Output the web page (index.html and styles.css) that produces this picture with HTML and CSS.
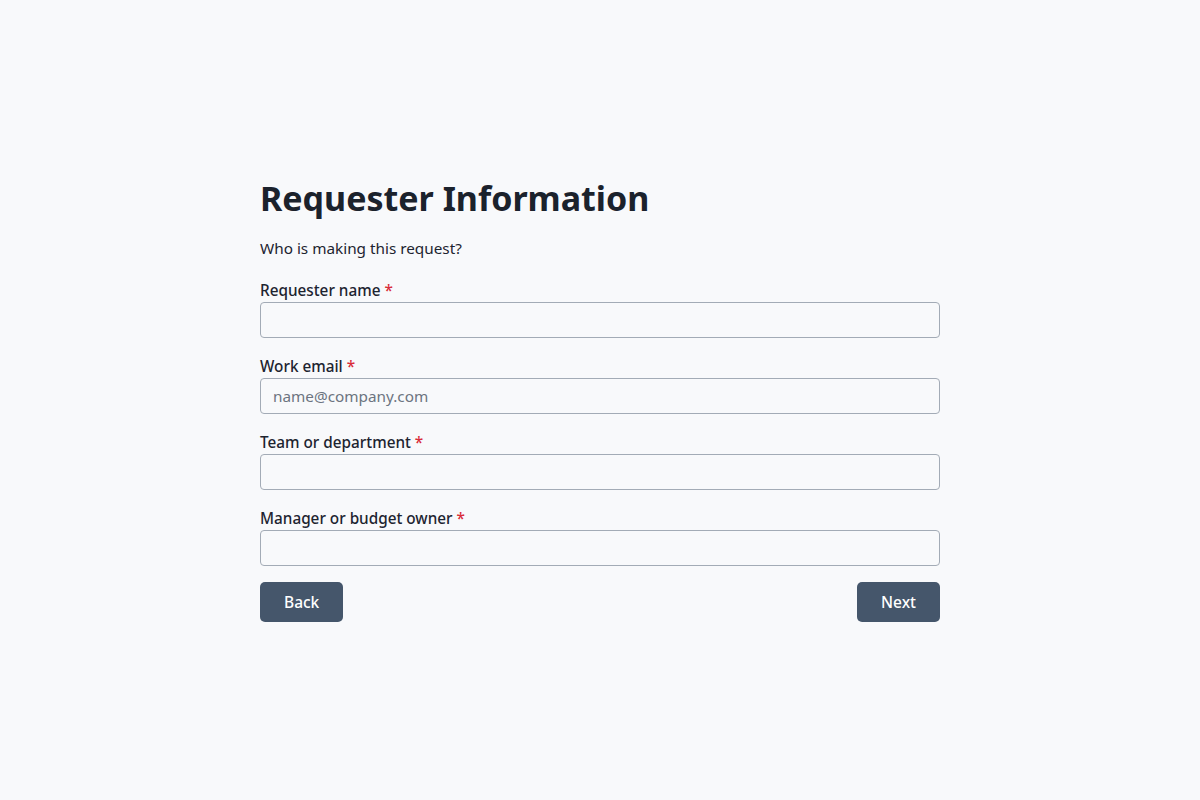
FILE: index.html
```html
<!DOCTYPE html>
<html lang="en">
<head>
<meta charset="utf-8">
<title>Requester Information</title>
<link rel="stylesheet" href="styles.css">
</head>
<body>
<main class="page">
  <form class="card">
    <h1 class="title">Requester Information</h1>
    <p class="subtitle">Who is making this request?</p>
    <div class="fields">
      <div class="field">
        <label class="label" for="name">Requester name <span class="req">*</span></label>
        <input class="input" id="name" type="text">
      </div>
      <div class="field">
        <label class="label" for="email">Work email <span class="req">*</span></label>
        <input class="input" id="email" type="email" placeholder="name@company.com">
      </div>
      <div class="field">
        <label class="label" for="team">Team or department <span class="req">*</span></label>
        <input class="input" id="team" type="text">
      </div>
      <div class="field">
        <label class="label" for="mgr">Manager or budget owner <span class="req">*</span></label>
        <input class="input" id="mgr" type="text">
      </div>
    </div>
    <div class="actions">
      <button type="button" class="btn btn-back">Back</button>
      <button type="button" class="btn btn-next">Next</button>
    </div>
  </form>
</main>
</body>
</html>
```
FILE: styles.css
```css
* { box-sizing: border-box; }
html, body {
  margin: 0;
  padding: 0;
  background: #f8f9fb;
  color: #1d2430;
  font-family: "Noto Sans", "Open Sans", sans-serif;
}
.page {
  min-height: 100vh;
  display: flex;
  align-items: center;
  justify-content: center;
  padding-bottom: 2px;
}
.card {
  width: 680px;
  display: flex;
  flex-direction: column;
}
.title {
  margin: 0;
  font-size: 34px;
  line-height: 44px;
  font-weight: 700;
  color: #1b222c;
  letter-spacing: 0;
}
.subtitle {
  margin: 16px 0 0;
  font-size: 15.3px;
  line-height: 24px;
  color: #1d2430;
}
.fields {
  margin-top: 18px;
  display: flex;
  flex-direction: column;
  gap: 16px;
}
.field {
  display: flex;
  flex-direction: column;
}
.label {
  font-size: 15.3px;
  line-height: 24px;
  font-weight: 500;
  color: #1d2430;
}
.req { color: #d92d3a; }
.input {
  height: 36px;
  width: 100%;
  border: 1px solid #a3abb6;
  border-radius: 4px;
  background: #f8f9fb;
  padding: 0 12px;
  font-family: inherit;
  font-size: 15.3px;
  color: #1d2430;
}
.input::placeholder { color: #6c7480; }
.actions {
  margin-top: 16px;
  display: flex;
  justify-content: space-between;
}
.btn {
  height: 40px;
  border: 0;
  border-radius: 5px;
  background: #45566b;
  color: #ffffff;
  font-family: inherit;
  font-size: 15.5px;
  font-weight: 500;
  padding: 0 24px;
  cursor: pointer;
}
```
